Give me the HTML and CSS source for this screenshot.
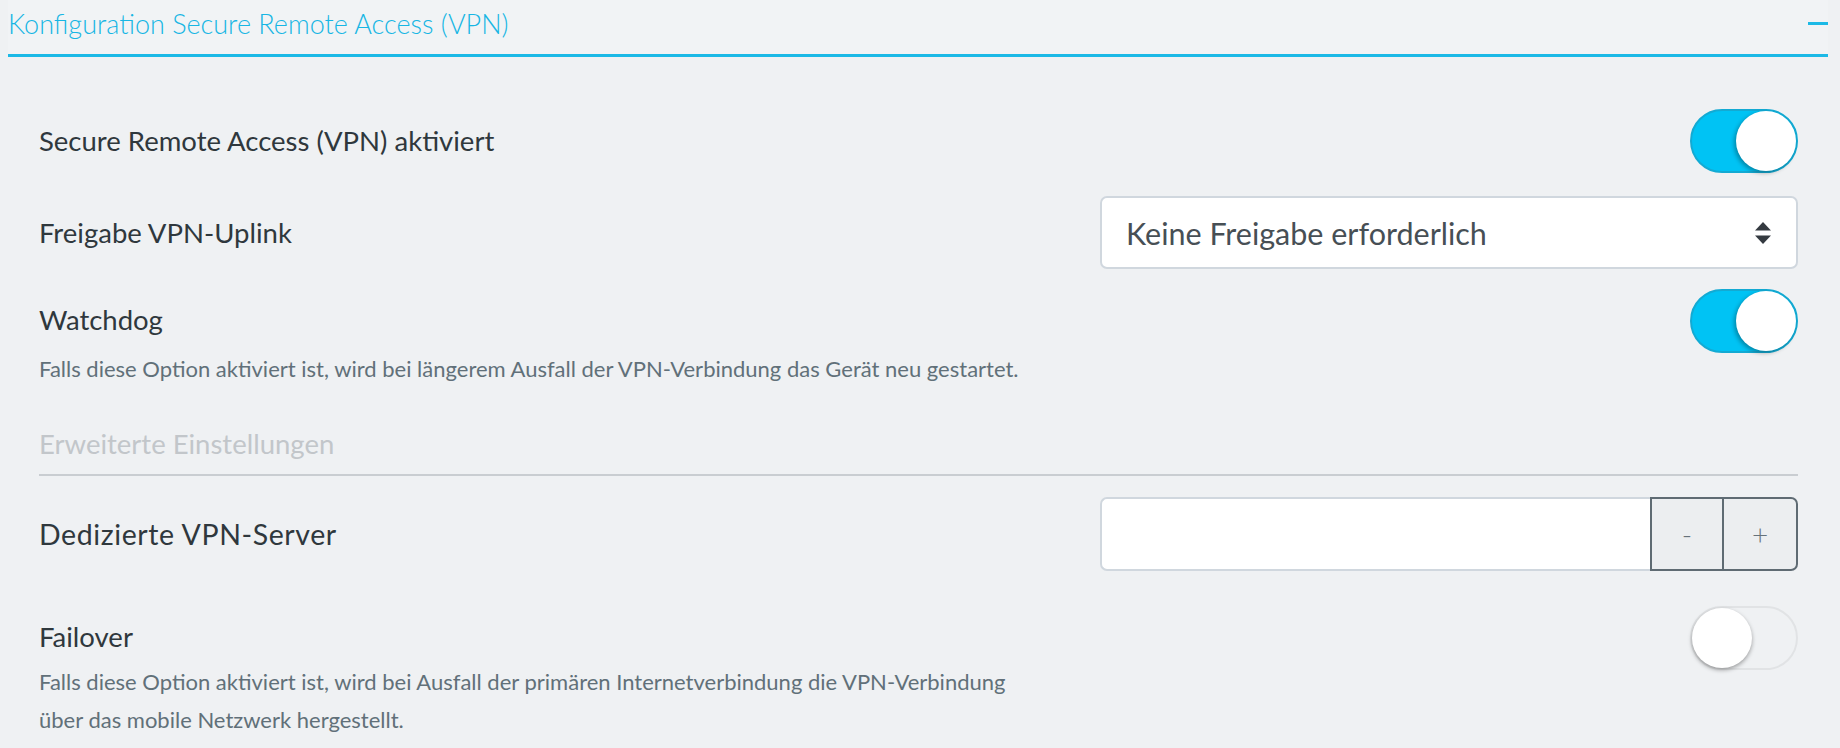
FILE: index.html
```html
<!DOCTYPE html>
<html lang="de">
<head>
    <meta charset="UTF-8">
    <meta name="viewport" content="width=device-width, initial-scale=1.0">
    <title>Konfiguration Secure Remote Access (VPN)</title>
    <link rel="stylesheet" href="styles.css">
</head>
<body>
    <div class="panel">
        <div class="panel-header">
            <h2 class="panel-title">Konfiguration Secure Remote Access (VPN)</h2>
            <span class="collapse-icon"></span>
        </div>

        <div class="panel-body">
            <div class="field field-first">
                <div class="field-text">
                    <div class="field-label">Secure Remote Access (VPN) aktiviert</div>
                </div>
                <div class="field-control">
                    <span class="toggle on"><span class="knob"></span></span>
                </div>
            </div>

            <div class="field field-select">
                <div class="field-text">
                    <div class="field-label">Freigabe VPN-Uplink</div>
                </div>
                <div class="field-control">
                    <div class="select">
                        <span>Keine Freigabe erforderlich</span>
                        <svg class="select-arrows" width="16" height="22" viewBox="0 0 16 22">
                            <path d="M8 0 L16 8.5 L0 8.5 Z" fill="#343a40"/>
                            <path d="M0 13.5 L16 13.5 L8 22 Z" fill="#343a40"/>
                        </svg>
                    </div>
                </div>
            </div>

            <div class="field field-top">
                <div class="field-text">
                    <div class="field-label">Watchdog</div>
                    <p class="field-help">Falls diese Option aktiviert ist, wird bei längerem Ausfall der VPN-Verbindung das Gerät neu gestartet.</p>
                </div>
                <div class="field-control">
                    <span class="toggle on"><span class="knob"></span></span>
                </div>
            </div>

            <h3 class="subheading">Erweiterte Einstellungen</h3>

            <div class="field field-servers">
                <div class="field-text">
                    <div class="field-label">Dedizierte VPN-Server</div>
                </div>
                <div class="field-control">
                    <div class="input-group">
                        <input type="text" class="input">
                        <button class="step-btn">-</button>
                        <button class="step-btn last">+</button>
                    </div>
                </div>
            </div>

            <div class="field field-top field-failover">
                <div class="field-text">
                    <div class="field-label">Failover</div>
                    <p class="field-help">Falls diese Option aktiviert ist, wird bei Ausfall der primären Internetverbindung die VPN-Verbindung über das mobile Netzwerk hergestellt.</p>
                </div>
                <div class="field-control">
                    <span class="toggle"><span class="knob"></span></span>
                </div>
            </div>
        </div>
    </div>
</body>
</html>
```

FILE: styles.css
```css
html, body {
    margin: 0;
    padding: 0;
}

body {
    font-family: Lato, "Open Sans", sans-serif;
    background-color: #eff1f3;
    color: #2f383d;
    height: 748px;
    overflow: hidden;
}

.panel {
    margin: 0 12px 0 8px;
}

.panel-header {
    display: flex;
    align-items: center;
    justify-content: space-between;
    padding: 4px 0 10px;
    border-bottom: 3px solid #1cb9e6;
    background-color: #f1f3f5;
}

.panel-title {
    margin: 0;
    font-size: 27px;
    font-weight: 300;
    line-height: 40px;
    color: #17b6e4;
}

.collapse-icon {
    display: block;
    width: 20px;
    height: 3px;
    background-color: #1cb9e6;
    margin-top: -2px;
}

.panel-body {
    padding: 52px 30px 0 31px;
}

.field {
    display: grid;
    grid-template-columns: 1fr 698px;
    column-gap: 40px;
    align-items: center;
}

.field-top {
    align-items: start;
}

.field-select {
    margin-top: 23px;
}

.field-top {
    margin-top: 20px;
}

.field-servers {
    margin-top: 21px;
}

.field-failover {
    margin-top: 35px;
}

.field-control {
    display: flex;
    justify-content: flex-end;
}

.field-label {
    font-size: 27.5px;
    line-height: 40px;
    color: #2f383d;
}

.field-servers .field-label {
    font-size: 28.5px;
    letter-spacing: 0.6px;
}

.field-top .field-label {
    padding-top: 11px;
}

.field-help {
    margin: 10px 0 0;
    max-width: 1000px;
    font-size: 22px;
    line-height: 38px;
    color: #617079;
}

.field-failover .field-help {
    margin-top: 6px;
}

.toggle {
    position: relative;
    display: block;
    width: 108px;
    height: 64px;
    box-sizing: border-box;
    border-radius: 32px;
    border: 2px solid #e1e3e5;
}

.toggle.on {
    background-color: #00c3f4;
    border-color: #13aad3;
}

.toggle .knob {
    position: absolute;
    top: 0;
    left: 0;
    width: 60px;
    height: 60px;
    border-radius: 50%;
    background-color: #fff;
    box-shadow: 0 2px 4px rgba(0, 0, 0, 0.35);
}

.toggle.on .knob {
    left: 44px;
    box-shadow: -2px 2px 4px rgba(0, 0, 0, 0.3);
}

.select {
    display: flex;
    align-items: center;
    justify-content: space-between;
    width: 100%;
    height: 73px;
    box-sizing: border-box;
    padding: 0 25px 0 24px;
    background-color: #fff;
    border: 2px solid #d0d7de;
    border-radius: 7px;
    font-size: 30.5px;
    color: #474f55;
}

.subheading {
    margin: 36px 0 0;
    padding-bottom: 10px;
    border-bottom: 2px solid #c9cdd1;
    font-size: 27.5px;
    font-weight: 400;
    line-height: 40px;
    color: #c2c6ca;
}

.input-group {
    display: flex;
    width: 100%;
    height: 74px;
}

.input {
    flex: 1;
    min-width: 0;
    margin: 0;
    box-sizing: border-box;
    border: 2px solid #d0d7de;
    border-right: none;
    border-radius: 7px 0 0 7px;
    background-color: #fff;
    font-size: 26px;
}

.step-btn {
    width: 74px;
    margin: 0;
    padding: 0;
    box-sizing: border-box;
    border: 2px solid #5f6b73;
    background-color: #eceef0;
    color: #66727a;
    font-family: Lato, sans-serif;
    font-size: 28px;
    font-weight: 300;
    cursor: pointer;
}

.step-btn.last {
    border-left: none;
    border-radius: 0 7px 7px 0;
}
```
